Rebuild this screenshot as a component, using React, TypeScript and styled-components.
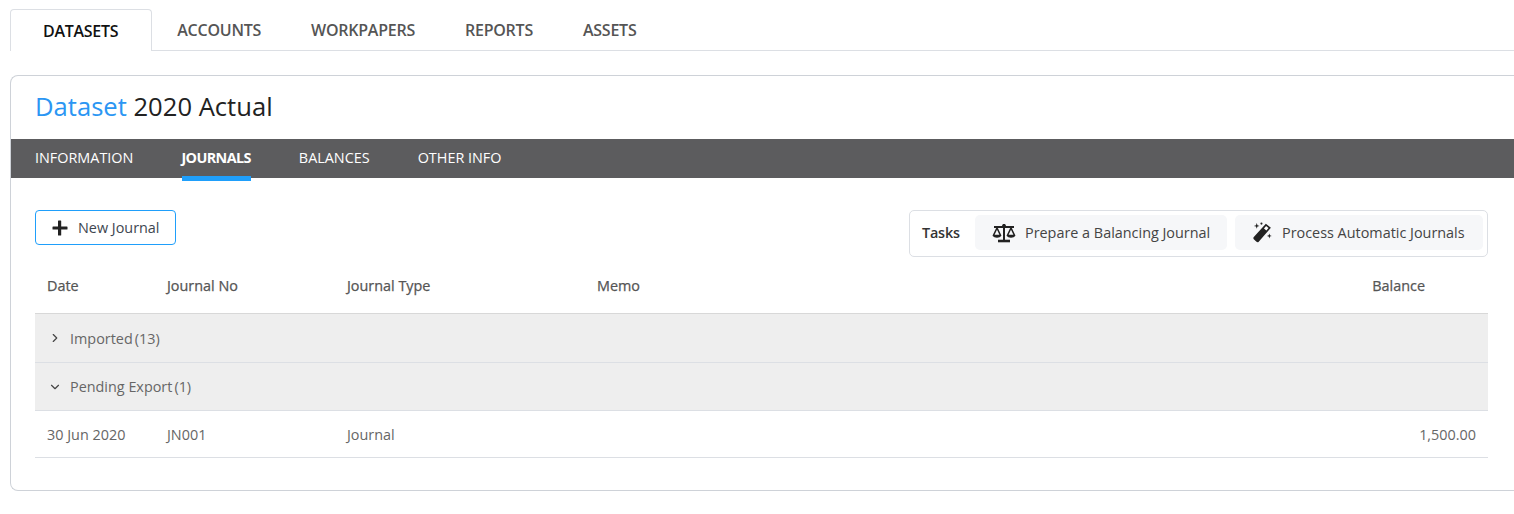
import React from "react";
import styled, { createGlobalStyle } from "styled-components";
import { ChevronDown, ChevronRight } from "lucide-react";

const Global = createGlobalStyle`
  html, body { margin: 0; padding: 0; background: #fff; overflow: hidden; }
  body { font-family: "Open Sans", "Liberation Sans", sans-serif; color: #555; }
`;

const Page = styled.div`
  padding: 9px 0 0 10px;
  width: 1504px;
  height: 505px;
`;

const TopTabs = styled.div`
  display: flex;
  height: 41px;
  border-bottom: 1px solid #dcdfe4;
`;

const TopTab = styled.div<{ $active?: boolean }>`
  display: flex;
  align-items: center;
  box-sizing: border-box;
  height: ${(p) => (p.$active ? "42px" : "41px")};
  font-size: 16px;
  font-weight: 600;
  letter-spacing: ${(p) => (p.$active ? "-0.28px" : "-0.24px")};
  padding: ${(p) => (p.$active ? "0 33px 0 32px" : "0 25px")};
  color: ${(p) => (p.$active ? "#111" : "#555")};
  background: #fff;
  ${(p) =>
    p.$active
      ? `border: 1px solid #dcdfe4; border-bottom: none; border-radius: 4px 4px 0 0;`
      : ""}
`;

const Panel = styled.div`
  margin-top: 24px;
  height: 416px;
  box-sizing: border-box;
  border: 1px solid #ced2d8;
  border-right: none;
  border-radius: 8px 0 0 8px;
`;

const Title = styled.div`
  box-sizing: border-box;
  height: 63px;
  padding: 0 0 3px 24px;
  display: flex;
  align-items: center;
  font-size: 25.6px;
  color: #222;
  white-space: pre;
`;

const Accent = styled.span`
  color: #2b96f3;
`;

const SubNav = styled.div`
  height: 39px;
  background: #5c5c5e;
  display: flex;
  padding-left: 24px;
  gap: 48px;
`;

const SubItem = styled.div<{ $active?: boolean }>`
  position: relative;
  display: flex;
  align-items: center;
  padding-bottom: 2px;
  font-size: 14.4px;
  color: #fff;
  font-weight: ${(p) => (p.$active ? 700 : 400)};
  letter-spacing: ${(p) => (p.$active ? "-0.6px" : "0")};
  ${(p) =>
    p.$active
      ? `&::after { content: ""; position: absolute; left: 1px; right: 0; top: 37px; height: 5px; background: #1f9ffb; }`
      : ""}
`;

const Body = styled.div`
  padding: 32px 26px 0 24px;
`;

const Toolbar = styled.div`
  display: flex;
  justify-content: space-between;
  align-items: flex-start;
`;

const NewButton = styled.div`
  box-sizing: border-box;
  width: 141px;
  height: 35px;
  border: 1px solid #1f9ffb;
  border-radius: 4px;
  display: flex;
  align-items: center;
  padding-left: 15px;
  gap: 9px;
  font-size: 14.4px;
  color: #3d4650;
`;

const TasksBox = styled.div`
  box-sizing: border-box;
  height: 47px;
  width: 579px;
  border: 1px solid #dcdfe4;
  border-radius: 5px;
  display: flex;
  align-items: center;
  padding: 0 4px 2px 12px;
  gap: 8px;
`;

const TasksLabel = styled.div`
  font-size: 14.4px;
  font-weight: 600;
  color: #333;
  width: 45px;
  letter-spacing: -0.2px;
`;

const TaskButton = styled.div<{ $w: number }>`
  box-sizing: border-box;
  width: ${(p) => p.$w}px;
  height: 35px;
  background: #f6f7f9;
  border-radius: 5px;
  display: flex;
  align-items: center;
  padding-left: 17px;
  gap: 9px;
  font-size: 14.4px;
  color: #444;
  white-space: nowrap;
`;

const Row = styled.div<{ $h: number; $border?: string }>`
  display: grid;
  grid-template-columns: 120px 180px 250px 1fr 200px;
  height: ${(p) => p.$h}px;
  box-sizing: border-box;
  align-items: center;
  padding: 0 12px;
  font-size: 14.4px;
  border-bottom: 1px solid ${(p) => p.$border || "#dcdfe4"};
`;

const HeadCell = styled.div<{ $right?: boolean }>`
  font-weight: 500;
  color: #555;
  -webkit-text-stroke: 0.25px #555;
  ${(p) => (p.$right ? "text-align: right; padding-right: 51px;" : "")}
`;

const Cell = styled.div<{ $right?: boolean }>`
  color: #666;
  ${(p) => (p.$right ? "text-align: right;" : "")}
`;

const GroupRow = styled.div<{ $h: number }>`
  display: flex;
  align-items: center;
  box-sizing: border-box;
  height: ${(p) => p.$h}px;
  background: #eeeeee;
  border-bottom: 1px solid #dcdfe4;
  padding-left: 13px;
  font-size: 14.4px;
  color: #666;
  gap: 8px;
  svg { color: #444; }
`;

const Count = styled.span`
  margin-left: 2px;
`;

const PlusIcon = () => (
  <svg width="18" height="18" viewBox="0 0 18 18" fill="#222">
    <rect x="7" y="1.500" width="3.200" height="15" rx="0.6" />
    <rect x="1.500" y="7.400" width="15" height="3.200" rx="0.6" />
  </svg>
);

const Scales = () => (
  <svg width="24" height="20" viewBox="0 0 24 20" fill="none" stroke="#222">
    <path d="M12 1v16" strokeWidth="2" />
    <circle cx="12" cy="3" r="2" fill="#222" stroke="none" />
    <path d="M2 4h20" strokeWidth="2" />
    <path d="M6 18h12" strokeWidth="2.6" />
    <path d="M5 5l-3.600 7.500h7.200zM19 5l-3.600 7.500h7.200z" strokeWidth="1.600" strokeLinejoin="round" />
    <path d="M1 12.500c.5 3 7.500 3 8 0zM15 12.500c.5 3 7.500 3 8 0z" fill="#222" stroke="none" />
  </svg>
);

const Wand = () => (
  <svg width="21" height="21" viewBox="0 0 20 20">
    <path d="M13.200 1.600 18 5.400 6.400 18.800a1.500 1.500 0 0 1-2.100.1L1.700 16.400a1.500 1.500 0 0 1 0-2.100z" fill="#222" />
    <path d="M13.400 3.800l2.300 1.900-2 2.300-2.300-1.900z" fill="#fff" />
    <path d="M4.500 1l.7 2 2 .7-2 .7-.7 2-.7-2-2-.7 2-.7z" fill="#222" />
    <path d="M16.500 11l.6 1.700 1.700.6-1.700.6-.6 1.700-.6-1.700-1.700-.6 1.700-.6z" fill="#222" />
    <circle cx="9" cy="1.500" r="1" fill="#222" />
  </svg>
);

export default function App() {
  return (
    <Page>
      <Global />
      <TopTabs>
        <TopTab $active>DATASETS</TopTab>
        <TopTab>ACCOUNTS</TopTab>
        <TopTab>WORKPAPERS</TopTab>
        <TopTab>REPORTS</TopTab>
        <TopTab>ASSETS</TopTab>
      </TopTabs>
      <Panel>
        <Title>
          <Accent>Dataset</Accent> 2020 Actual
        </Title>
        <SubNav>
          <SubItem>INFORMATION</SubItem>
          <SubItem $active>JOURNALS</SubItem>
          <SubItem>BALANCES</SubItem>
          <SubItem>OTHER INFO</SubItem>
        </SubNav>
        <Body>
          <Toolbar>
            <NewButton>
              <PlusIcon />
              New Journal
            </NewButton>
            <TasksBox>
              <TasksLabel>Tasks</TasksLabel>
              <TaskButton $w={252}>
                <Scales />
                Prepare a Balancing Journal
              </TaskButton>
              <TaskButton $w={248}>
                <Wand />
                Process Automatic Journals
              </TaskButton>
            </TasksBox>
          </Toolbar>
          <Row $h={57} $border="#d8d8d8">
            <HeadCell>Date</HeadCell>
            <HeadCell>Journal No</HeadCell>
            <HeadCell>Journal Type</HeadCell>
            <HeadCell>Memo</HeadCell>
            <HeadCell $right>Balance</HeadCell>
          </Row>
          <GroupRow $h={49}>
            <ChevronRight size={14} strokeWidth={2} />
            <span>
              Imported<Count>(13)</Count>
            </span>
          </GroupRow>
          <GroupRow $h={48}>
            <ChevronDown size={14} strokeWidth={2} />
            <span>
              Pending Export<Count>(1)</Count>
            </span>
          </GroupRow>
          <Row $h={47}>
            <Cell>30 Jun 2020</Cell>
            <Cell>JN001</Cell>
            <Cell>Journal</Cell>
            <Cell />
            <Cell $right>1,500.00</Cell>
          </Row>
        </Body>
      </Panel>
    </Page>
  );
}
